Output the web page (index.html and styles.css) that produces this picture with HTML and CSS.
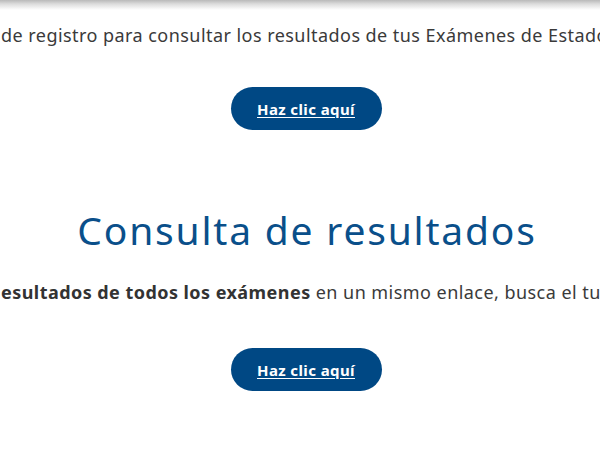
FILE: index.html
```html
<!DOCTYPE html>
<html lang="es">
<head>
<meta charset="utf-8">
<title>Consulta de resultados</title>
<link rel="stylesheet" href="styles.css">
</head>
<body>
  <div class="top-shadow"></div>
  <main class="page">
    <section class="block block-first">
      <p class="lead">de registro para consultar los resultados de tus Exámenes de Estado</p>
      <a class="btn" href="#">Haz clic aquí</a>
    </section>
    <section class="block block-second">
      <h2 class="title">Consulta de resultados</h2>
      <p class="lead"><strong>esultados de todos los exámenes</strong> en un mismo enlace, busca el tuyo</p>
      <a class="btn" href="#">Haz clic aquí</a>
    </section>
  </main>
</body>
</html>
```
FILE: styles.css
```css
html, body {
  margin: 0;
  padding: 0;
  background: #ffffff;
  overflow: hidden;
}
body {
  width: 600px;
  height: 455px;
  font-family: "Noto Sans", "Open Sans", "Liberation Sans", sans-serif;
  color: #3a3a3a;
}
.top-shadow {
  height: 10px;
  background: linear-gradient(to bottom, #b9b9b9 0%, #dcdcdc 40%, #ffffff 100%);
}
.page {
  display: flex;
  flex-direction: column;
}
.block {
  display: flex;
  flex-direction: column;
  align-items: center;
}
.lead {
  align-self: stretch;
  margin: 0;
  padding-left: 1px;
  white-space: nowrap;
  overflow: hidden;
  font-size: 18px;
  letter-spacing: 0.45px;
  line-height: 24px;
  color: #3a3a3a;
}
.lead strong {
  font-weight: 700;
  color: #333333;
}
.block-first {
  padding-top: 13px;
}
.btn {
  display: flex;
  align-items: center;
  justify-content: center;
  width: 151px;
  height: 43px;
  margin-left: 12px;
  border-radius: 22px;
  background: #004884;
  color: #ffffff;
  font-weight: 700;
  font-size: 15px;
  letter-spacing: 0.4px;
  text-decoration: underline;
  text-underline-offset: 2px;
  box-sizing: border-box;
}
.block-first .btn {
  margin-top: 40px;
}
.block-second {
  padding-top: 76px;
}
.title {
  margin: 0 0 0 14px;
  font-size: 39px;
  font-weight: 400;
  letter-spacing: 1.8px;
  line-height: 48px;
  color: #0a4f8a;
}
.block-second .lead {
  margin-top: 26px;
}
.block-second .btn {
  margin-top: 44px;
}
```
